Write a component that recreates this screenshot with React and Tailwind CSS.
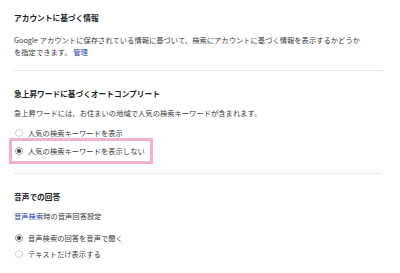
export default function App() {
  const font = { fontFamily: '"Noto Sans CJK JP", "Noto Sans", sans-serif' };
  const Radio = ({ checked }) => (
    <span
      className={`inline-flex h-[8px] w-[8px] shrink-0 items-center justify-center rounded-full border ${
        checked ? "border-[#9a9a9a]" : "border-[#d0d0d0]"
      }`}
    >
      {checked && <span className="h-[4px] w-[4px] rounded-full bg-[#444]" />}
    </span>
  );
  return (
    <div
      className="h-[273px] w-[400px] overflow-hidden bg-white pl-[14px] pr-[18px] pt-[12px] text-[7.3px] text-[#3a3a3a]"
      style={font}
    >
      <div className="text-[7.7px] font-bold leading-[12px] text-[#222]">アカウントに基づく情報</div>
      <div className="mt-[10px] text-[7.3px] leading-[12px]">
        Google アカウントに保存されている情報に基づいて、検索にアカウントに基づく情報を表示するかどうか
        <br />
        を指定できます。 <span className="text-[#2a3ea6]">管理</span>
      </div>
      <div className="mt-[12px] h-[1px] bg-[#e6e6e6]" />
      <div className="mt-[17px] text-[7.7px] font-bold leading-[12px] text-[#222]">急上昇ワードに基づくオートコンプリート</div>
      <div className="mt-[7px] text-[7.3px] leading-[12px]">急上昇ワードには、お住まいの地域で人気の検索キーワードが含まれます。</div>
      <div className="mt-[9px] flex h-[10px] items-center gap-[5px] pl-[1px] text-[7.3px]">
        <Radio />
        <span>人気の検索キーワードを表示</span>
      </div>
      <div className="-ml-[5px] flex h-[26px] w-[144px] items-center gap-[5px] border-[3px] border-[#f3b0cd] pl-[3px] text-[7.3px]">
        <Radio checked />
        <span>人気の検索キーワードを表示しない</span>
      </div>
      <div className="mt-[9px] h-[1px] bg-[#e6e6e6]" />
      <div className="mt-[17px] text-[7.7px] font-bold leading-[12px] text-[#222]">音声での回答</div>
      <div className="mt-[7px] text-[7.3px] leading-[12px]">
        <span className="text-[#2a3ea6]">音声検索</span>時の音声回答設定
      </div>
      <div className="mt-[10px] flex h-[12px] items-center gap-[5px] pl-[1px] text-[7.3px]">
        <Radio checked />
        <span>音声検索の回答を音声で聞く</span>
      </div>
      <div className="mt-[4px] flex h-[12px] items-center gap-[5px] pl-[1px] text-[7.3px]">
        <Radio />
        <span>テキストだけ表示する</span>
      </div>
    </div>
  );
}
